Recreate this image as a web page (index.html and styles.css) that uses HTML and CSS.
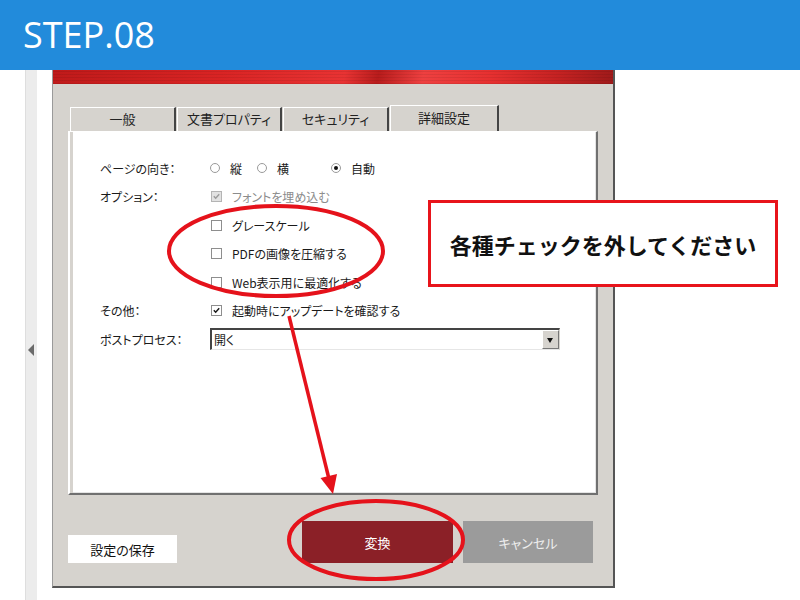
FILE: index.html
```html
<!DOCTYPE html>
<html lang="ja">
<head>
    <meta charset="UTF-8">
    <title>STEP.08</title>
    <link rel="stylesheet" href="styles.css">
</head>
<body>
<header class="step">STEP.08</header>
<div class="stage">
    <div class="sidebar"><span class="collapse"></span></div>
    <div class="dialog">
        <div class="banner"></div>
        <ul class="tabs">
            <li class="t1">一般</li>
            <li class="t2">文書プロパティ</li>
            <li class="t3">セキュリティ</li>
            <li class="t4 active">詳細設定</li>
        </ul>
        <div class="panel">
            <div class="label">ページの向き：</div>
            <div class="value">
                <span class="opt o1"><span class="radio"></span>縦</span>
                <span class="opt o2"><span class="radio"></span>横</span>
                <span class="opt"><span class="radio on"></span>自動</span>
            </div>

            <div class="label">オプション：</div>
            <div class="value off"><span class="check disabled"><svg viewBox="0 0 11 11"><path d="M2.2 5.2 L4.5 7.6 L8.8 2.8"/></svg></span>フォントを埋め込む</div>

            <div class="label"></div>
            <div class="value"><span class="check"></span>グレースケール</div>

            <div class="label"></div>
            <div class="value"><span class="check"></span>PDFの画像を圧縮する</div>

            <div class="label"></div>
            <div class="value"><span class="check"></span>Web表示用に最適化する</div>

            <div class="label">その他：</div>
            <div class="value"><span class="check"><svg viewBox="0 0 11 11"><path d="M2.2 5.2 L4.5 7.6 L8.8 2.8"/></svg></span>起動時にアップデートを確認する</div>

            <div class="label">ポストプロセス：</div>
            <div class="value">
                <div class="select">
                    <span class="selected">開く</span>
                    <span class="drop"></span>
                </div>
            </div>
        </div>
        <div class="footer">
            <div class="btn save">設定の保存</div>
            <div class="btn convert">変換</div>
            <div class="btn cancel">キャンセル</div>
        </div>
    </div>
</div>

<div class="note">各種チェックを外してください</div>

<svg class="marks" width="800" height="600" viewBox="0 0 800 600">
    <ellipse cx="276" cy="251" rx="107" ry="45" fill="none" stroke="#e5121b" stroke-width="4"/>
    <ellipse cx="376" cy="540" rx="87" ry="39" fill="none" stroke="#e5121b" stroke-width="4"/>
    <line x1="289" y1="316" x2="329" y2="479" stroke="#e5121b" stroke-width="3.5"/>
    <polygon points="333,494 320.5,478 337,474" fill="#e5121b"/>
</svg>
</body>
</html>
```

FILE: styles.css
```css
*{
    margin: 0;
    padding: 0;
    list-style: none;
    box-sizing: border-box;
}
body{
    background: #fff;
    font-family: "Noto Sans CJK JP", "Noto Sans", sans-serif;
    width: 800px;
    height: 600px;
    overflow: hidden;
    position: relative;
}
.step{
    height: 70px;
    background: #228bdb;
    color: #fff;
    font-family: "Open Sans", "Noto Sans", sans-serif;
    font-size: 36px;
    line-height: 70px;
    padding-left: 23px;
}
.stage{
    display: flex;
    height: 530px;
}
.sidebar{
    width: 12px;
    margin-left: 25px;
    margin-right: 15px;
    background: #ececec;
    border-left: 1px solid #dedede;
    padding-top: 274px;
}
.collapse{
    display: block;
    width: 0;
    height: 0;
    margin-left: 2px;
    border-right: 6px solid #6b6b6b;
    border-top: 6px solid transparent;
    border-bottom: 6px solid transparent;
}
.dialog{
    width: 563px;
    height: 518px;
    background: #d6d3ce;
    border-left: 1px solid #9a9a9a;
    border-right: 2px solid #555;
    border-bottom: 2px solid #555;
    display: flex;
    flex-direction: column;
}
.banner{
    height: 14px;
    background:
        repeating-linear-gradient(0deg, rgba(0,0,0,0.07) 0 1px, transparent 1px 3px),
        linear-gradient(100deg, #bf1a1a 0%, #d92424 30%, #e83333 52%, #b81c1c 58%, #ee4040 66%, #e63030 78%, #c52222 90%, #9e1a1a 100%);
}
.tabs{
    display: flex;
    align-items: flex-end;
    height: 26px;
    margin-top: 21px;
    padding-left: 17px;
}
.tabs li{
    height: 24px;
    background: #d6d3ce;
    border-top: 1px solid #fff;
    border-left: 1px solid #fff;
    border-right: 2px solid #444;
    font-size: 13px;
    font-feature-settings: "palt";
    color: #222;
    text-align: center;
    line-height: 22px;
    margin-right: 1px;
}
.tabs .t1{ width: 106px; margin-right: 1px; }
.tabs .t2{ width: 105px; }
.tabs .t3{ width: 106px; }
.tabs .t4{ width: 109px; }
.tabs .active{
    height: 26px;
    line-height: 24px;
}
.panel{
    height: 364px;
    margin: 0 15px;
    background: #fff;
    border-top: 1px solid #fff;
    border-left: 2px solid #fff;
    border-right: 2px solid #707070;
    border-bottom: 2px solid #707070;
    box-shadow: inset 3px 0 0 #d6d3ce, inset -1px -1px 0 #e4e4e4;
    display: grid;
    grid-template-columns: 110px 360px;
    grid-auto-rows: 28.5px;
    align-items: center;
    padding: 22px 0 0 30px;
    font-size: 12px;
    font-feature-settings: "palt";
    color: #1a1a1a;
}
.value{
    display: flex;
    align-items: center;
}
.value.off{
    color: #8c8c8c;
}
.opt{
    display: inline-flex;
    align-items: center;
}
.o1{ width: 47px; }
.o2{ width: 74px; }
.radio{
    width: 10px;
    height: 10px;
    border: 1px solid #9a9a9a;
    border-radius: 50%;
    margin-right: 10px;
    background: #fff;
    position: relative;
}
.radio.on::after{
    content: "";
    position: absolute;
    left: 2px;
    top: 2px;
    width: 4px;
    height: 4px;
    border-radius: 50%;
    background: #111;
}
.check{
    width: 11px;
    height: 11px;
    border: 1px solid #8e8e8e;
    background: #fff;
    margin-left: 1px;
    margin-right: 10px;
    display: flex;
}
.check svg{
    width: 9px;
    height: 9px;
    fill: none;
    stroke: #1a1a1a;
    stroke-width: 1.8;
}
.check.disabled{
    background: #e2e2e2;
    border-color: #b4b4b4;
}
.check.disabled svg{
    stroke: #9c9c9c;
}
.select{
    width: 350px;
    height: 22px;
    display: flex;
    align-items: center;
    border-top: 2px solid #444;
    border-left: 2px solid #444;
    border-right: 1px solid #d6d3ce;
    border-bottom: 1px solid #e6e6e6;
    background: #fff;
}
.selected{
    flex: 1;
    padding-left: 2px;
}
.drop{
    width: 17px;
    height: 19px;
    background: #d6d3ce;
    border-top: 1px solid #fff;
    border-left: 1px solid #fff;
    border-right: 1px solid #777;
    border-bottom: 1px solid #777;
    position: relative;
}
.drop::after{
    content: "";
    position: absolute;
    left: 4px;
    top: 7px;
    border-top: 5px solid #111;
    border-left: 3.5px solid transparent;
    border-right: 3.5px solid transparent;
}
.footer{
    flex: 1;
    display: flex;
    align-items: flex-end;
    padding: 0 20px 23px 15px;
}
.btn{
    display: flex;
    align-items: center;
    justify-content: center;
    font-size: 13px;
    font-feature-settings: "palt";
}
.save{
    width: 109px;
    height: 28px;
    background: #fff;
    color: #111;
}
.convert{
    width: 151px;
    height: 42px;
    margin-left: auto;
    background: #8b2027;
    color: #fff;
}
.cancel{
    width: 130px;
    height: 42px;
    margin-left: 10px;
    background: #9b9b9b;
    color: #eee;
}
.note{
    position: absolute;
    left: 428px;
    top: 200px;
    width: 350px;
    height: 87px;
    border: 3px solid #e8141b;
    background: #fff;
    display: flex;
    align-items: center;
    justify-content: center;
    font-size: 22px;
    font-weight: bold;
    color: #111;
}
.marks{
    position: absolute;
    left: 0;
    top: 0;
    pointer-events: none;
}
```
